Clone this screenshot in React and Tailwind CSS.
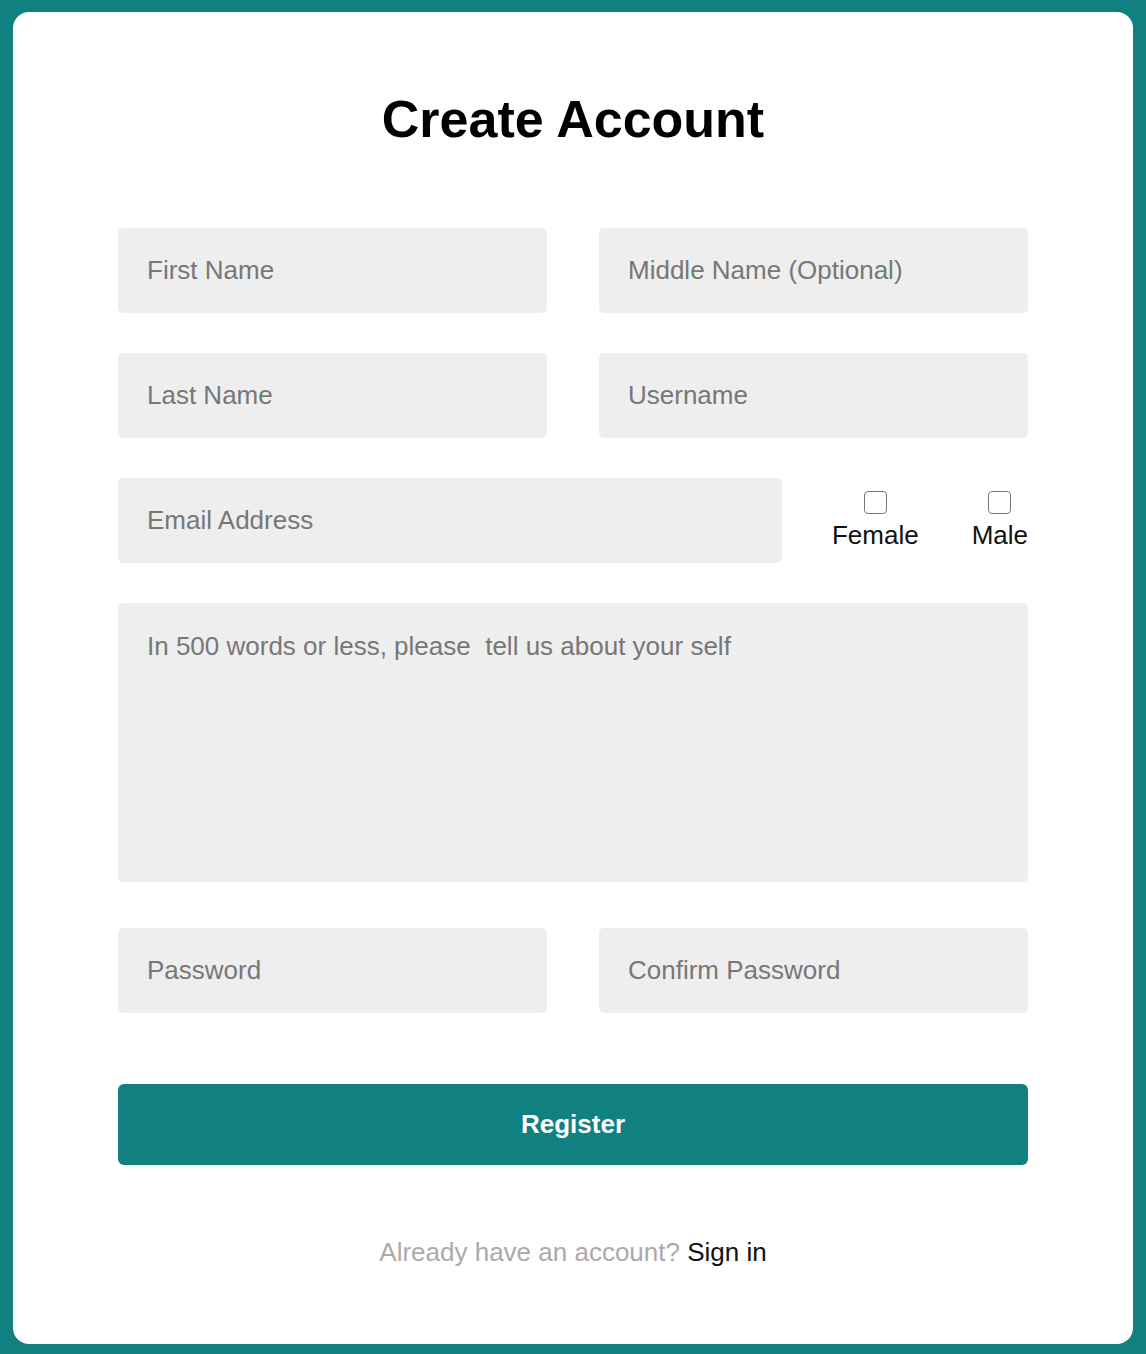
import React from "react";

const font = { fontFamily: '"Liberation Sans", Arial, Helvetica, sans-serif' };

function Field({ placeholder, className = "" }) {
  return (
    <input
      type="text"
      placeholder={placeholder}
      className={`h-[85px] rounded-[5px] bg-[#eeeeee] px-[29px] text-[26px] text-[#222] placeholder:text-[#777777] outline-none ${className}`}
    />
  );
}

function Check({ label }) {
  return (
    <label className="flex flex-col items-center gap-[6px] text-[26px] leading-[30px] text-[#111]">
      <span className="block w-[23px] h-[23px] rounded-[4px] border-[1.5px] border-[#777777] bg-white" />
      <span>{label}</span>
    </label>
  );
}

export default function App() {
  return (
    <div className="min-h-[1354px] bg-[#118080] pt-[12px] px-[13px] pb-[10px]" style={font}>
      <div className="h-[1332px] rounded-[16px] bg-white px-[105px] pt-[77px]">
        <h1 className="text-center text-[52px] leading-[60px] font-bold text-black">Create Account</h1>
        <div className="mt-[79px] flex flex-col">
          <div className="grid grid-cols-2 gap-x-[52px] gap-y-[40px]">
            <Field placeholder="First Name" />
            <Field placeholder="Middle Name (Optional)" />
            <Field placeholder="Last Name" />
            <Field placeholder="Username" />
          </div>
          <div className="mt-[40px] flex items-center">
            <Field placeholder="Email Address" className="w-[664px]" />
            <div className="ml-auto flex items-center gap-[53px]">
              <Check label="Female" />
              <Check label="Male" />
            </div>
          </div>
          <textarea
            placeholder="In 500 words or less, please  tell us about your self"
            className="mt-[40px] h-[279px] resize-none rounded-[5px] bg-[#eeeeee] px-[29px] pt-[28px] text-[26px] leading-[30px] text-[#222] placeholder:text-[#777777] outline-none"
          />
          <div className="mt-[46px] grid grid-cols-2 gap-x-[52px]">
            <Field placeholder="Password" />
            <Field placeholder="Confirm Password" />
          </div>
          <button className="mt-[71px] h-[81px] rounded-[6px] bg-[#118080] text-[26px] font-bold text-white">
            Register
          </button>
          <p className="mt-[72px] text-center text-[26px] leading-[30px]">
            <span className="text-[#aaaaaa]">Already have an account? </span>
            <span className="text-[#111]">Sign in</span>
          </p>
        </div>
      </div>
    </div>
  );
}
